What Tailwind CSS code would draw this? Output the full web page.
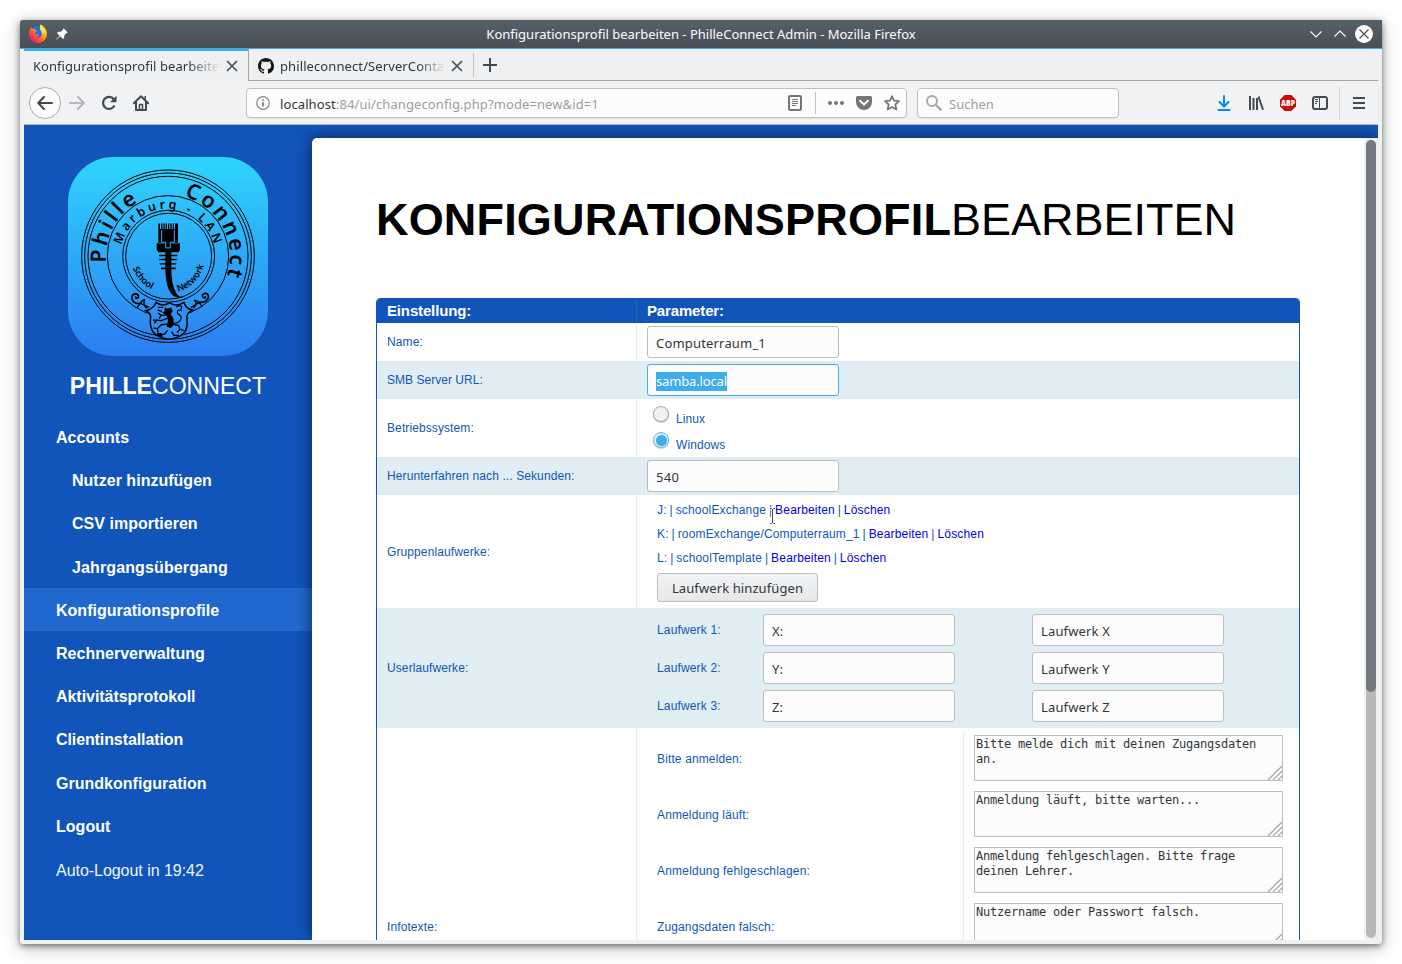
<!DOCTYPE html>
<html lang="de">
<head>
<meta charset="utf-8">
<title>Konfigurationsprofil bearbeiten - PhilleConnect Admin</title>
<script src="https://cdn.jsdelivr.net/npm/@tailwindcss/browser@4"></script>
</head>
<body class="w-[1402px] h-[964px] overflow-hidden bg-white p-5 font-['Noto_Sans',sans-serif] text-[13px] text-[#31363b]">
<div class="w-[1362px] h-[924px] flex flex-col bg-[#eff0f1] rounded-tl-[3px] rounded-b-[3px] shadow-[0_2px_6px_rgba(0,0,0,0.5),0_4px_20px_rgba(0,0,0,0.22)]">

  <!-- Window title bar -->
  <header class="relative h-[29px] shrink-0 flex items-center rounded-tl-[3px] border-b border-[#3daee9] bg-linear-to-b from-[#566067] to-[#474f57]">
    <svg class="ml-2 w-5 h-5" viewBox="0 0 20 20">
      <defs>
        <linearGradient id="fx" x1="0.9" y1="0.1" x2="0.2" y2="0.9"><stop offset="0" stop-color="#fff44f"/><stop offset=".35" stop-color="#ffb020"/><stop offset=".65" stop-color="#ff5a2c"/><stop offset="1" stop-color="#f0186c"/></linearGradient>
      </defs>
      <circle cx="9.6" cy="9" r="7" fill="#1d6fe8"/>
      <path d="M1.2 7C2 5 2.600 4 3.400 3.300L4.200 5C5.200 4.500 6.300 4.600 7.200 5.200C7.600 6.100 8.200 6.300 9.300 6.600C9 7.500 8 7.800 7.300 8.500C6.900 9.500 7.400 10 8.200 10.400C9.500 10.700 10.400 10.200 11.300 10.800C10.800 12.200 9.500 13 7.900 12.900C9.700 14 12.700 13.600 13.700 11C14.400 9 13.700 7.500 12.600 6C11.500 4.500 11.700 2.200 12.700.6C13.700 1.400 15.500 2 16.500 4C18 5 18.900 7.500 18.900 10C18.900 15 15 19.200 10 19.200C5 19.200 1 15.200 1 10.200Z" fill="url(#fx)"/>
      <path d="M12.700.6C11.700 2.200 11.500 4.500 12.600 6C13.700 7.500 14.400 9 13.700 11C16 9.500 16 6 14.800 3.800C14.200 2.500 13.300 1.800 12.700.6Z" fill="#ffe83a"/>
    </svg>
    <svg class="ml-[7px] w-3.5 h-3.5" viewBox="0 0 14 14" fill="#fcfcfc"><path d="M8.600 1.200L12.800 5.400L11.600 5.900L9.300 8.200L9.200 10.800L8 12L5.300 9.300L1.800 12.400L1.300 12.500L1.500 11.900L4.700 8.700L2 6L3.200 4.800L5.800 4.700L8.100 2.400Z"/></svg>
    <span class="absolute left-0 right-0 top-[5px] text-center leading-[18px] text-[#fcfcfc]">Konfigurationsprofil bearbeiten - PhilleConnect Admin - Mozilla Firefox</span>
    <svg class="ml-auto mr-2 w-[66px] h-5" viewBox="0 0 66 20" fill="none" stroke="#fcfcfc" stroke-width="1.200"><path d="M2.500 7.500L8 13L13.500 7.500M26.500 12.500L32 7L37.500 12.500"/><circle cx="56" cy="10" r="9" fill="#fcfcfc" stroke="none"/><path d="M51.500 5.500L60.500 14.500M60.500 5.500L51.500 14.500" stroke="#475057"/></svg>
  </header>

  <!-- Tab strip -->
  <div class="h-8 shrink-0 mx-1 flex leading-[18px]">
    <div class="w-[224px] shrink-0 flex items-center border-t-2 border-[#3daee9] pl-[9px]">
      <span class="w-[188px] whitespace-nowrap overflow-hidden tracking-[0.05px] [mask-image:linear-gradient(to_right,#000_82%,transparent)]">Konfigurationsprofil bearbeiten</span>
      <svg class="ml-1 w-3.5 h-3.5" viewBox="0 0 14 14" stroke="#46494d" stroke-width="1.600"><path d="M2 2L12 12M12 2L2 12"/></svg>
    </div>
    <div class="flex-1 flex items-center border-l border-b border-[#a3a5a7]">
      <svg class="ml-[9px] mt-0.5 w-4 h-4" viewBox="0 0 16 16" fill="#161514"><path d="M8 0C3.580 0 0 3.580 0 8c0 3.540 2.290 6.530 5.470 7.590.4.070.55-.17.55-.38 0-.19-.01-.82-.01-1.490-2.010.37-2.530-.49-2.690-.94-.09-.23-.48-.94-.82-1.130-.28-.15-.68-.52-.01-.53.63-.01 1.080.58 1.230.82.72 1.210 1.870.87 2.330.66.07-.52.28-.87.51-1.070-1.780-.2-3.640-.89-3.640-3.950 0-.87.31-1.590.82-2.150-.08-.2-.36-1.020.08-2.120 0 0 .67-.21 2.200.82.64-.18 1.320-.27 2-.27s1.360.09 2 .27c1.530-1.040 2.200-.82 2.200-.82.44 1.100.16 1.920.08 2.120.51.56.82 1.270.82 2.150 0 3.070-1.870 3.750-3.650 3.950.29.25.54.73.54 1.480 0 1.070-.01 1.930-.01 2.200 0 .21.15.46.55.38A8.010 8.010 0 0 0 16 8c0-4.420-3.580-8-8-8z"/></svg>
      <span class="ml-1.5 mt-0.5 w-[165px] whitespace-nowrap overflow-hidden tracking-[0.1px] [mask-image:linear-gradient(to_right,#000_84%,transparent)]">philleconnect/ServerContainer</span>
      <svg class="ml-[5px] mt-0.5 w-3.5 h-3.5" viewBox="0 0 14 14" stroke="#46494d" stroke-width="1.600"><path d="M2 2L12 12M12 2L2 12"/></svg>
      <i class="ml-[9px] w-px h-6 bg-[#c4c5c6]"></i>
      <svg class="ml-2 w-4 h-4" viewBox="0 0 16 16" stroke="#46494d" stroke-width="2"><path d="M8 1V15M1 8H15"/></svg>
    </div>
  </div>

  <!-- Navigation toolbar -->
  <div class="h-11 shrink-0 mx-1 flex items-center border-b border-[#b4b6b8] bg-[#f1f2f4] text-[#46494d]">
    <div class="ml-[5px] w-8 h-8 rounded-full border border-[#a9abad] bg-[#fcfcfc] grid place-items-center">
      <svg class="w-4 h-4" viewBox="0 0 16 16" fill="none" stroke="currentColor" stroke-width="2" stroke-linecap="round" stroke-linejoin="round"><path d="M15 8H1.500M7 2L1.200 8L7 14"/></svg>
    </div>
    <svg class="ml-2 w-4 h-4 text-[#b4b6b9]" viewBox="0 0 16 16" fill="none" stroke="currentColor" stroke-width="2" stroke-linecap="round" stroke-linejoin="round"><path d="M1 8H14.500M9 2L14.800 8L9 14"/></svg>
    <svg class="ml-4 w-4 h-4" viewBox="0 0 16 16"><path d="M12.800 4.200A6 6 0 1 0 13.500 10.500" fill="none" stroke="currentColor" stroke-width="2.200"/><path d="M15.500 .8V7.300H9Z" fill="currentColor"/></svg>
    <svg class="ml-4 w-4 h-4" viewBox="0 0 16 16" fill="none" stroke="currentColor" stroke-width="2" stroke-linejoin="round"><path d="M.8 8.300L8 1.200L15.200 8.300" stroke-linecap="round"/><path d="M3 7V15H13V7"/><path d="M6.500 15V9.500H9.500V15" stroke-width="1.500"/><path d="M12.200 1V4.500" stroke-width="1.500"/></svg>

    <div class="ml-[97px] w-[661px] h-[30px] rounded-[4px] border border-[#bfc1c3] bg-[#fcfcfc] shadow-[0_1px_1px_rgba(0,0,0,0.05)] flex items-center">
      <svg class="ml-[9px] w-3.5 h-3.5" viewBox="0 0 14 14" fill="none" stroke="#84888c" stroke-width="1.200"><circle cx="7" cy="7" r="6.300"/><path d="M7 6V10.500M7 3.200V4.800" stroke-width="1.800"/></svg>
      <span class="ml-[10px] pt-[2px] leading-[18px] tracking-[0.1px] text-[#9b9ea1]"><span class="text-[#31363b]">localhost</span>:84/ui/changeconfig.php?mode=new&amp;id=1</span>
      <svg class="ml-auto w-4 h-4" viewBox="0 0 16 16" fill="none" stroke="#737579"><rect x="2" y="1" width="12" height="14" rx="1.200" stroke-width="2"/><path d="M5 4.500H11M5 6.500H11M5 8.500H11M5 10.500H9"/></svg>
      <i class="ml-3 w-px h-[22px] bg-[#bfc1c3]"></i>
      <svg class="ml-3 w-4 h-4" viewBox="0 0 16 16" fill="#737579"><circle cx="2" cy="8" r="2"/><circle cx="8" cy="8" r="2"/><circle cx="14" cy="8" r="2"/></svg>
      <svg class="ml-3 w-4 h-4" viewBox="0 0 16 16"><path d="M1.500 1H14.500A1.500 1.500 0 0 1 16 2.500V7A8 8 0 0 1 0 7V2.500A1.500 1.500 0 0 1 1.500 1Z" fill="#737579"/><path d="M4 5.700L8 9.500L12 5.700" fill="none" stroke="#fcfcfc" stroke-width="2" stroke-linecap="round" stroke-linejoin="round"/></svg>
      <svg class="ml-3 mr-1.5 w-4 h-4" viewBox="0 0 16 16" fill="none" stroke="#737579" stroke-width="1.700" stroke-linejoin="round"><path d="M8 1.200L10 5.700L15 6.200L11.300 9.500L12.400 14.600L8 12L3.600 14.600L4.700 9.500L1 6.200L6 5.700Z"/></svg>
    </div>
    <div class="ml-[10px] w-[202px] h-[30px] rounded-[4px] border border-[#bfc1c3] bg-[#fcfcfc] shadow-[0_1px_1px_rgba(0,0,0,0.05)] flex items-center">
      <svg class="ml-2 w-4 h-4" viewBox="0 0 16 16" fill="none" stroke="#a7a9ab" stroke-width="2"><circle cx="6" cy="6" r="5"/><path d="M9.800 9.800L15.500 15.500" stroke-width="2.400"/></svg>
      <span class="ml-[7px] pt-[2px] leading-[18px] text-[#9b9ea1]">Suchen</span>
    </div>
    <svg class="ml-[97px] w-4 h-4" viewBox="0 0 16 16" fill="none" stroke="#0a84ff" stroke-width="2" stroke-linecap="round" stroke-linejoin="round"><path d="M8 1V11M3.500 7L8 11.500L12.500 7M2.500 15H13.500"/></svg>
    <svg class="ml-4 w-4 h-4" viewBox="0 0 16 16" fill="none" stroke="currentColor" stroke-width="2"><path d="M2 1V15M5.500 3V15M9 3V15M10.500 1.500L15 14.800"/></svg>
    <svg class="ml-4 w-4 h-4 overflow-visible" viewBox="0 0 16 16"><path d="M4.700 0H11.300L16 4.700V11.300L11.300 16H4.700L0 11.300V4.700Z" fill="#cc0a0a"/><text x="8" y="11" text-anchor="middle" textLength="14" lengthAdjust="spacingAndGlyphs" font-family="Open Sans, sans-serif" font-weight="800" font-size="8.500" fill="#fff">ABP</text></svg>
    <svg class="ml-4 w-4 h-4" viewBox="0 0 16 16" fill="none" stroke="currentColor"><rect x="1" y="2" width="14" height="12" rx="2" stroke-width="2"/><path d="M7.500 2V14"/><path d="M3 4.500H6M3 6.500H6M3 8.500H5"/></svg>
    <i class="ml-[11px] w-px h-8 bg-[#d3d4d6]"></i>
    <svg class="ml-[11px] w-4 h-4" viewBox="0 0 16 16" stroke="currentColor" stroke-width="2"><path d="M2 3H14M2 8H14M2 13H14"/></svg>
  </div>

  <!-- Page -->
  <div class="h-[815px] shrink-0 mx-1 flex overflow-hidden bg-[#1155bb] font-['Liberation_Sans',sans-serif]">
    <aside class="w-[288px] shrink-0 pt-8 text-white">
      <svg class="mx-auto w-[200px] h-[199px]" viewBox="54 36 600 598" preserveAspectRatio="none" fill="none" stroke="#000">
        <defs>
          <linearGradient id="lg" x1="0" y1="0" x2="0" y2="1"><stop offset="0" stop-color="#2fd5fd"/><stop offset="1" stop-color="#2b7df0"/></linearGradient>
          <path id="a1" d="M168 334A186 186 0 1 1 540 334A186 186 0 1 1 168 334"/>
          <path id="a0" d="M354 520A186 186 0 0 1 354 148A186 186 0 0 1 540 334"/>
          <path id="a2" d="M354 477A143 143 0 0 1 354 191A143 143 0 0 1 354 477"/>
          <path id="a3" d="M243 334A111 111 0 0 0 465 334"/>
        </defs>
        <rect x="54" y="36" width="600" height="598" rx="135" fill="url(#lg)" stroke="none"/>
        <g stroke-width="3">
          <circle cx="354" cy="334" r="259"/><circle cx="354" cy="334" r="250"/><circle cx="354" cy="334" r="240"/>
          <circle cx="354" cy="334" r="182"/><circle cx="356" cy="334" r="138"/><circle cx="356" cy="334" r="129"/>
        </g>
        <g fill="#000" stroke="none" font-family="Noto Sans, sans-serif">
          <text font-size="64" font-weight="600" letter-spacing="9"><textPath href="#a0" startOffset="272">Phille</textPath></text>
          <text font-size="64" font-weight="600" letter-spacing="7.500"><textPath href="#a1" startOffset="341">Connect</textPath></text>
          <text font-size="37" font-weight="600" letter-spacing="9.600"><textPath href="#a2" startOffset="258">Marburg - LAN</textPath></text>
          <text font-size="27" font-weight="600"><textPath href="#a3" startOffset="36">School</textPath></text>
          <text font-size="27" font-weight="600"><textPath href="#a3" startOffset="205">Network</textPath></text>
        </g>
        <g fill="#000" stroke="none">
          <path d="M325 236H330V252H333V236H337V252H340V236H344V252H347V236H351V252H354V236H358V252H361V236H365V252H368V236H372V252H375V236H384V295H390V316L385 322H325L320 314V295H325Z"/>
          <path d="M346 318H364V376C364 400 368 425 378 444C384 454 392 458 402 458C384 463 366 456 357 436C349 418 347 398 346 376Z"/>
          <path d="M327 330H382V334H327ZM328 342H380V346H328ZM329 355H379V359H329ZM333 368H377V373H333Z"/>
        </g>
        <path d="M335 256V292H347V309H361V292H373V256" stroke="#29b5f8" stroke-width="3"/>
        <path d="M326 295H344M364 295H384" stroke="#29b5f8" stroke-width="2"/>
        <path d="M318 473C332 484 346 482 358 474C372 484 388 482 402 473C406 486 416 494 428 496C412 502 408 510 411 524C414 552 408 576 357 584C306 576 300 552 301 526C304 514 302 504 288 498C302 494 312 488 318 473Z" fill="#2e90f4" stroke-width="4.500"/>
        <g stroke-width="5" stroke-linecap="round">
          <path d="M272 476C254 480 243 466 246 455C250 443 268 446 265 457C263 462 256 461 257 457M446 472C464 476 477 464 475 453C472 441 454 446 458 455C460 461 467 460 466 456"/>
          <path d="M262 488C270 478 275 464 284 465C280 474 283 484 290 490M274 477L296 487M456 484C448 476 444 464 434 467C440 474 438 482 432 488M446 474L424 488" stroke-width="4"/>
        </g>
        <g stroke-width="4" stroke-linecap="round" stroke-linejoin="round">
          <path d="M326 488L338 488M324 496L334 500M352 510L334 512L326 506M334 512L328 520M350 522L334 528L320 526M322 526L314 534M320 526L310 526M352 538L334 540L322 552L312 550M322 552L324 562M374 540L386 542L390 554L382 562M390 554L400 556M352 558L344 568L330 570M366 562L372 572L386 572"/>
          <path d="M372 536C394 534 398 518 388 510C376 502 384 492 394 498M380 486C390 478 400 486 392 494" stroke-width="3.500"/>
        </g>
        <path d="M344 488L352 492L364 488L368 500L362 508L370 520L372 540L362 550L350 546L354 526L348 510L336 504L344 500ZM320 566L334 564L338 576L326 576Z" fill="#000" stroke="none"/>
      </svg>
      <h3 class="mt-[17px] text-center text-[23.100px] leading-[27px]"><b>PHILLE</b>CONNECT</h3>
      <nav class="mt-[15.500px] font-bold text-base flex flex-col tracking-[0.02px] [&>*]:pt-[2px]">
        <a class="h-[43.200px] pl-8 flex items-center">Accounts</a>
        <a class="h-[43.200px] pl-12 flex items-center">Nutzer hinzufügen</a>
        <a class="h-[43.200px] pl-12 flex items-center">CSV importieren</a>
        <a class="h-[43.200px] pl-12 flex items-center tracking-[0.12px]">Jahrgangsübergang</a>
        <a class="h-[43.200px] pl-8 flex items-center bg-[#2068cd]">Konfigurationsprofile</a>
        <a class="h-[43.200px] pl-8 flex items-center">Rechnerverwaltung</a>
        <a class="h-[43.200px] pl-8 flex items-center tracking-[-0.05px]">Aktivitätsprotokoll</a>
        <a class="h-[43.200px] pl-8 flex items-center tracking-[-0.1px]">Clientinstallation</a>
        <a class="h-[43.200px] pl-8 flex items-center">Grundkonfiguration</a>
        <a class="h-[43.200px] pl-8 flex items-center">Logout</a>
        <span class="h-[43.200px] pl-8 mt-px flex items-center font-normal tracking-[-0.04px] text-[#f0f5fc]">Auto-Logout in 19:42</span>
      </nav>
    </aside>

    <div class="mt-[13px] w-[1066px] flex rounded-tl-[5px] bg-white shadow-[0_0_16px_rgba(0,0,0,0.6)] overflow-hidden">
      <main class="flex-1 pl-16 pt-[56px]">
        <h1 class="text-[45px] leading-[52px] text-black whitespace-nowrap"><b class="tracking-[0.17px]">KONFIGURATIONSPROFIL</b>BEARBEITEN</h1>

        <div class="mt-[52px] w-[924px] h-[800px] rounded-t-[4px] border border-[#1155bb] text-[12px] leading-[14px] tracking-[0.1px] text-[#1155bb] overflow-hidden">
          <div class="h-6 flex items-center bg-[#1155bb] text-white text-[15px] tracking-[-0.15px] font-bold">
            <div class="w-[260px] h-full flex items-center pl-2.5 border-r border-[#0a72a6]">Einstellung:</div>
            <div class="pl-2.5">Parameter:</div>
          </div>
          <div class="h-[38px] flex items-center">
            <div class="w-[260px] h-full flex items-center pl-2.5 border-r border-[#e0edf3]">Name:</div>
            <div class="ml-2.5 w-48 h-8 rounded-[3px] border border-[#bcbebf] bg-[#fcfcfc] pl-2 pt-[2px] flex items-center font-['Noto_Sans',sans-serif] text-[13px] tracking-[0.18px] text-[#31363b]">Computerraum_1</div>
          </div>
          <div class="h-[38px] flex items-center bg-[#e0edf3]">
            <div class="w-[260px] pl-2.5 tracking-[0.03px]">SMB Server URL:</div>
            <div class="ml-2.5 w-48 h-8 rounded-[3px] border border-[#3daee9] bg-[#fcfcfc] pl-2 pt-[2px] flex items-center font-['Noto_Sans',sans-serif] text-[13px] tracking-[-0.15px] text-[#fcfcfc]"><span class="bg-[#3daee9] leading-[19px]">samba.local</span></div>
          </div>
          <div class="h-[58px] flex">
            <div class="w-[260px] flex items-center pl-2.5 border-r border-[#e0edf3]">Betriebssystem:</div>
            <div class="pl-[15px] pt-[6px] flex flex-col gap-[8px]">
              <div class="h-[18px] flex"><i class="mt-px ml-px w-4 h-4 rounded-full border border-[#a6a8a9] bg-[#eff0f1] shadow-[0_1px_1px_rgba(0,0,0,0.2)]"></i><span class="ml-[7px] mt-[7px]">Linux</span></div>
              <div class="h-[18px] flex"><i class="mt-px ml-px w-4 h-4 rounded-full border border-[#5db8e9] bg-[#e2eff6] grid place-items-center shadow-[0_1px_1px_rgba(0,0,0,0.2)]"><i class="w-[11px] h-[11px] rounded-full bg-[#3daee9]"></i></i><span class="ml-[7px] mt-[7px]">Windows</span></div>
            </div>
          </div>
          <div class="h-[38px] flex items-center bg-[#e0edf3]">
            <div class="w-[260px] pl-2.5">Herunterfahren nach ... Sekunden:</div>
            <div class="ml-2.5 w-48 h-8 rounded-[3px] border border-[#bcbebf] bg-[#fcfcfc] pl-2 pt-[2px] flex items-center font-['Noto_Sans',sans-serif] text-[13px] tracking-[0.35px] text-[#31363b]">540</div>
          </div>
          <div class="h-[113px] flex">
            <div class="w-[260px] flex items-center pl-2.5 border-r border-[#e0edf3]">Gruppenlaufwerke:</div>
            <div class="relative pl-5 pt-[3px] leading-6">
              <div class="tracking-[0.17px] [word-spacing:-0.650px]">
              <p>J: | schoolExchange | <a class="text-[#0000ee]">Bearbeiten</a> | <a class="text-[#0000ee]">Löschen</a></p>
              <p>K: | roomExchange/Computerraum_1 | <a class="text-[#0000ee]">Bearbeiten</a> | <a class="text-[#0000ee]">Löschen</a></p>
              <p>L: | schoolTemplate | <a class="text-[#0000ee]">Bearbeiten</a> | <a class="text-[#0000ee]">Löschen</a></p>
              </div>
              <div class="mt-[3px] w-[161px] h-[29px] rounded-[3px] border border-[#bcbebf] bg-linear-to-b from-[#f1f2f3] to-[#e7e8e9] pt-px flex items-center justify-center font-['Noto_Sans',sans-serif] text-[13px] tracking-[0.1px] text-[#31363b]">Laufwerk hinzufügen</div>
              <!-- Text cursor -->
              <svg class="absolute left-[132px] top-[12px] w-[7px] h-[18px]" viewBox="0 0 7 18" fill="none"><path d="M1 1.500H2.500L3.500 2.500L4.500 1.500H6M3.500 2V16M1 16.500H2.500L3.500 15.500L4.500 16.500H6" stroke="#fff" stroke-width="2.500"/><path d="M1 1.500H2.500L3.500 2.500L4.500 1.500H6M3.500 2V16M1 16.500H2.500L3.500 15.500L4.500 16.500H6" stroke="#4a4a4a"/></svg>
            </div>
          </div>
          <div class="h-[120px] flex bg-[#e0edf3]">
            <div class="w-[260px] flex items-center pl-2.5">Userlaufwerke:</div>
            <div class="pl-5 pt-[6px] grid grid-cols-[106px_269px_192px] grid-rows-[32px_32px_32px] gap-y-1.5 content-start font-['Noto_Sans',sans-serif] text-[13px] tracking-[0.15px] text-[#31363b]">
              <span class="self-center font-['Liberation_Sans',sans-serif] text-[12px] text-[#1155bb]">Laufwerk 1:</span>
              <div class="w-48 rounded-[3px] border border-[#bcbebf] bg-[#fcfcfc] pl-2 pt-[2px] flex items-center">X:</div>
              <div class="w-48 rounded-[3px] border border-[#bcbebf] bg-[#fcfcfc] pl-2 pt-[2px] flex items-center">Laufwerk X</div>
              <span class="self-center font-['Liberation_Sans',sans-serif] text-[12px] text-[#1155bb]">Laufwerk 2:</span>
              <div class="w-48 rounded-[3px] border border-[#bcbebf] bg-[#fcfcfc] pl-2 pt-[2px] flex items-center">Y:</div>
              <div class="w-48 rounded-[3px] border border-[#bcbebf] bg-[#fcfcfc] pl-2 pt-[2px] flex items-center">Laufwerk Y</div>
              <span class="self-center font-['Liberation_Sans',sans-serif] text-[12px] text-[#1155bb]">Laufwerk 3:</span>
              <div class="w-48 rounded-[3px] border border-[#bcbebf] bg-[#fcfcfc] pl-2 pt-[2px] flex items-center">Z:</div>
              <div class="w-48 rounded-[3px] border border-[#bcbebf] bg-[#fcfcfc] pl-2 pt-[2px] flex items-center">Laufwerk Z</div>
            </div>
          </div>
          <div class="h-[398px] flex">
            <div class="w-[260px] flex items-center pl-2.5 border-r border-[#e0edf3]">Infotexte:</div>
            <div class="w-[327px] mt-[3px] pl-5 border-r border-[#e0edf3] flex flex-col tracking-[0.13px]">
              <div class="h-14 flex items-center">Bitte anmelden:</div>
              <div class="h-14 flex items-center">Anmeldung läuft:</div>
              <div class="h-14 flex items-center tracking-[0.2px]">Anmeldung fehlgeschlagen:</div>
              <div class="h-14 flex items-center">Zugangsdaten falsch:</div>
            </div>
            <div class="pl-2.5 pt-[7px] flex flex-col gap-2.5 font-['DejaVu_Sans_Mono',monospace] text-[12px] leading-[15px] tracking-[-0.224px] text-[#31363b]">
              <div class="w-[309px] h-[46px] border border-[#bcbebf] bg-[#fcfcfc] pl-px pt-px flex"><p class="w-[290px]">Bitte melde dich mit deinen Zugangsdaten an.</p><svg class="ml-auto self-end w-[15px] h-[15px]" viewBox="0 0 15 15" stroke="#a9abad" stroke-width="1.400"><path d="M1 15L15 1M6 15L15 6M11 15L15 11"/></svg></div>
              <div class="w-[309px] h-[46px] border border-[#bcbebf] bg-[#fcfcfc] pl-px pt-px flex"><p class="w-[290px]">Anmeldung läuft, bitte warten...</p><svg class="ml-auto self-end w-[15px] h-[15px]" viewBox="0 0 15 15" stroke="#a9abad" stroke-width="1.400"><path d="M1 15L15 1M6 15L15 6M11 15L15 11"/></svg></div>
              <div class="w-[309px] h-[46px] border border-[#bcbebf] bg-[#fcfcfc] pl-px pt-px flex"><p class="w-[290px]">Anmeldung fehlgeschlagen. Bitte frage deinen Lehrer.</p><svg class="ml-auto self-end w-[15px] h-[15px]" viewBox="0 0 15 15" stroke="#a9abad" stroke-width="1.400"><path d="M1 15L15 1M6 15L15 6M11 15L15 11"/></svg></div>
              <div class="w-[309px] h-[46px] border border-[#bcbebf] bg-[#fcfcfc] pl-px pt-px flex"><p class="w-[290px]">Nutzername oder Passwort falsch.</p><svg class="ml-auto self-end w-[15px] h-[15px]" viewBox="0 0 15 15" stroke="#a9abad" stroke-width="1.400"><path d="M1 15L15 1M6 15L15 6M11 15L15 11"/></svg></div>
            </div>
          </div>
        </div>
      </main>
      <!-- Scrollbar -->
      <div class="w-3.5 shrink-0 bg-[#eff0f1] px-0.5 pt-0.5 pb-0.5">
        <div class="h-full rounded-full bg-[#b7b8ba]"><div class="h-[552px] rounded-full bg-[#75787d]"></div></div>
      </div>
    </div>
  </div>
</div>
</body>
</html>
